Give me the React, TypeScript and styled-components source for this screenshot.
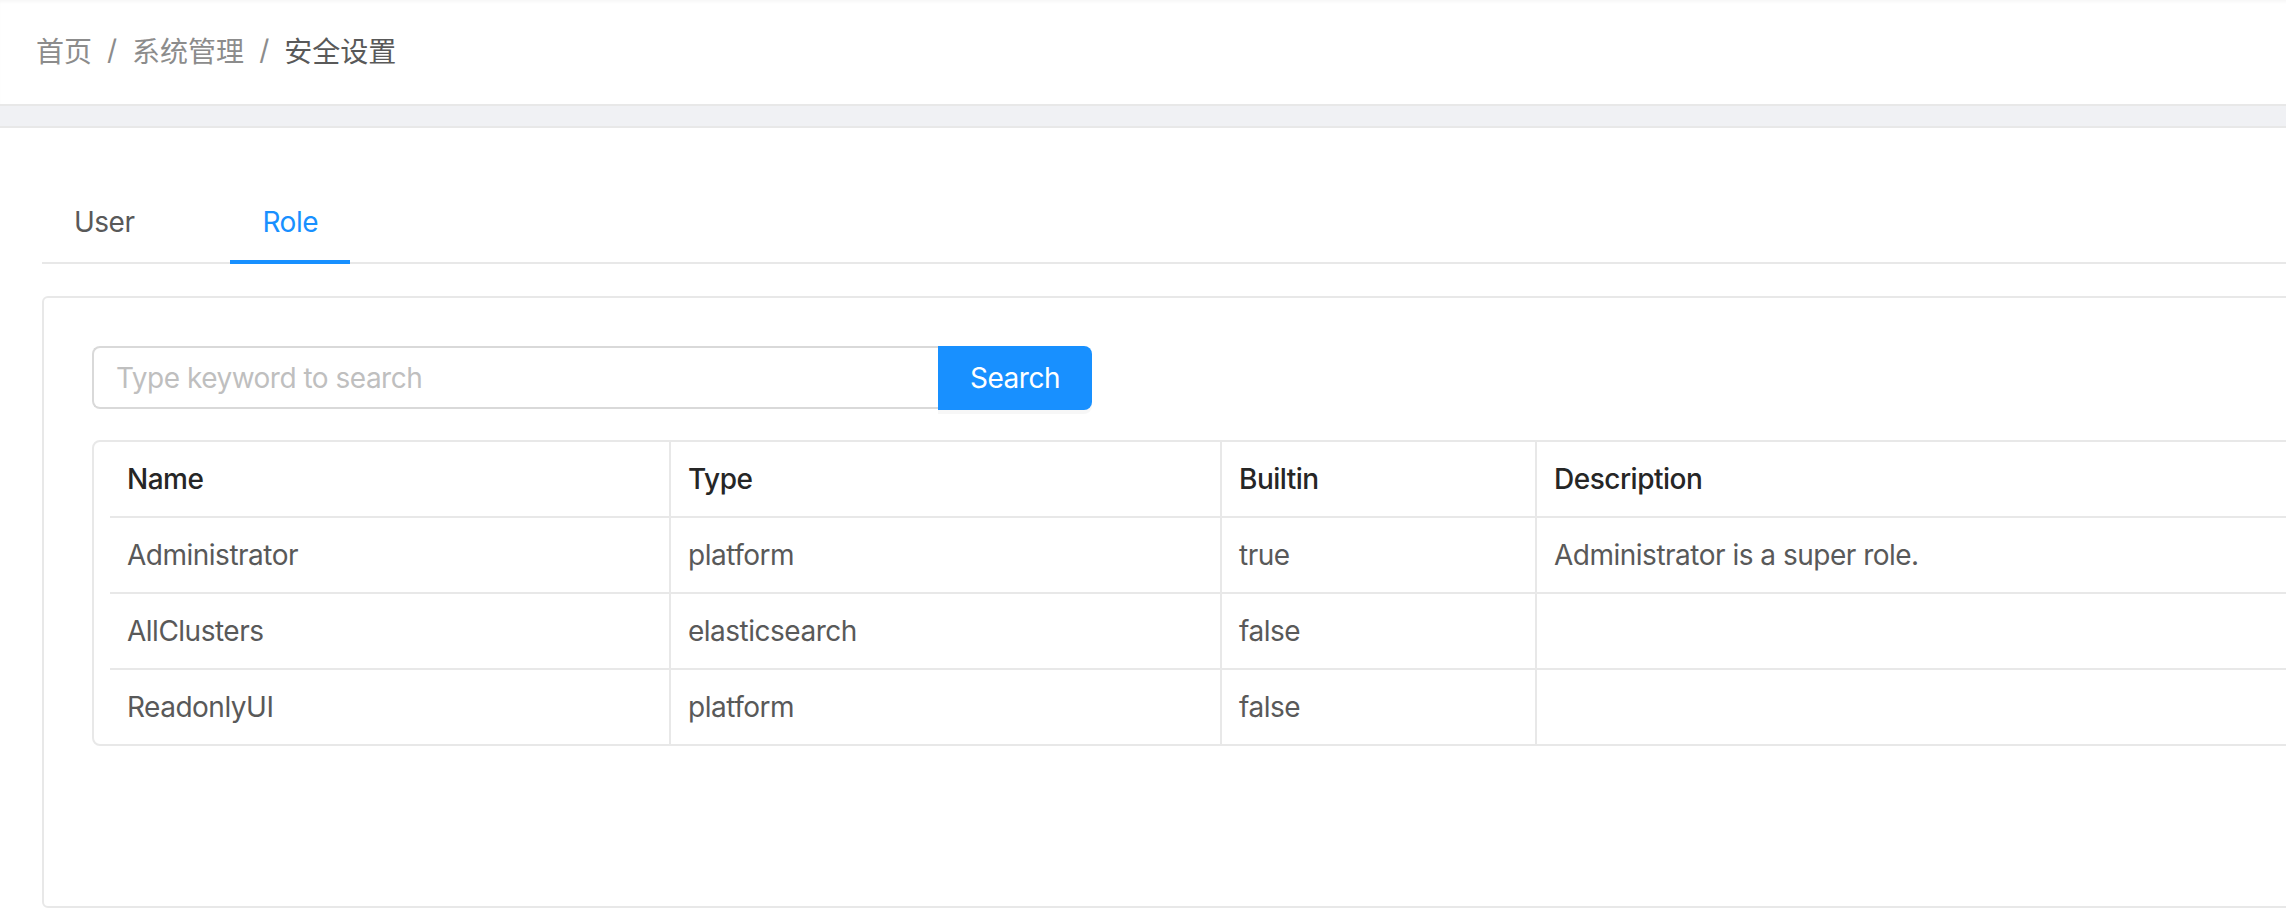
import React from "react";
import styled, { createGlobalStyle } from "styled-components";

const GlobalStyle = createGlobalStyle`
  html, body {
    margin: 0;
    padding: 0;
    background: #ffffff;
    overflow: hidden;
  }
  body {
    font-family: Inter, "Noto Sans CJK SC", "Noto Sans", sans-serif;
    letter-spacing: -0.5px;
    -webkit-font-smoothing: antialiased;
  }
  * { box-sizing: border-box; }
`;

const Page = styled.div`
  width: 2460px;
  min-height: 910px;
  background: #ffffff;
`;

const Header = styled.header`
  height: 106px;
  display: flex;
  align-items: center;
  padding-left: 36px;
  padding-bottom: 4px;
  background: #ffffff;
  border-bottom: 2px solid #e8e8e8;
  box-shadow: inset 0 3px 3px -1px rgba(0, 0, 0, 0.035);
`;

const Crumbs = styled.nav`
  display: flex;
  align-items: center;
  font-size: 28px;
  line-height: 44px;
  letter-spacing: 0;
  font-family: "Noto Sans CJK SC", Inter, sans-serif;
`;

const Crumb = styled.span<{ $current?: boolean }>`
  color: ${(p) => (p.$current ? "#595959" : "#8c8c8c")};
`;

const Sep = styled.span`
  margin: 0 15px;
  color: #8c8c8c;
  font-family: Inter, sans-serif;
`;

const Band = styled.div`
  height: 22px;
  background: #f0f1f4;
  border-bottom: 2px solid #e8e8e8;
`;

const Content = styled.main`
  padding: 44px 0 0 42px;
`;

const TabBar = styled.div`
  display: flex;
  gap: 64px;
  border-bottom: 2px solid #e8e8e8;
`;

const Tab = styled.div<{ $active?: boolean }>`
  position: relative;
  padding: 28px 32px 18px;
  font-size: 28px;
  line-height: 44px;
  color: ${(p) => (p.$active ? "#1890ff" : "#595959")};
  &::after {
    content: "";
    position: absolute;
    left: 0;
    right: 0;
    bottom: -2px;
    height: 4px;
    background: ${(p) => (p.$active ? "#1890ff" : "transparent")};
  }
`;

const Card = styled.section`
  margin-top: 32px;
  height: 612px;
  border: 2px solid #e8e8e8;
  border-radius: 6px;
  padding: 48px;
  background: #ffffff;
`;

const SearchRow = styled.div`
  display: flex;
  align-items: stretch;
  height: 64px;
`;

const SearchInput = styled.input`
  width: 846px;
  height: 63px;
  border: 2px solid #d9d9d9;
  border-right: none;
  border-radius: 8px 0 0 8px;
  padding: 0 22px;
  font-family: Inter, sans-serif;
  font-size: 28px;
  letter-spacing: -0.5px;
  color: #595959;
  outline: none;
  &::placeholder {
    color: #bfbfbf;
  }
`;

const SearchButton = styled.button`
  width: 154px;
  height: 64px;
  border: none;
  border-radius: 0 8px 8px 0;
  background: #1890ff;
  color: #ffffff;
  font-family: Inter, sans-serif;
  font-size: 28px;
  letter-spacing: -0.5px;
  box-shadow: 0 4px 0 rgba(0, 0, 0, 0.03);
  cursor: pointer;
`;

const TableWrap = styled.div`
  margin-top: 30px;
  border: 2px solid #e8e8e8;
  border-radius: 8px;
  padding-left: 16px;
`;

const Grid = styled.div`
  display: grid;
  grid-template-columns: 559px 551px 315px 1fr;
`;

const Cell = styled.div<{ $head?: boolean; $first?: boolean; $last?: boolean }>`
  height: ${(p) => (p.$last ? "74px" : "76px")};
  display: flex;
  align-items: center;
  padding-left: 17px;
  font-size: 28px;
  color: ${(p) => (p.$head ? "#262626" : "#595959")};
  font-weight: ${(p) => (p.$head ? 500 : 400)};
  border-left: ${(p) => (p.$first ? "none" : "2px solid #e8e8e8")};
  border-bottom: ${(p) => (p.$last ? "none" : "2px solid #e8e8e8")};
  white-space: nowrap;
`;

const columns = ["Name", "Type", "Builtin", "Description"];

const rows = [
  ["Administrator", "platform", "true", "Administrator is a super role."],
  ["AllClusters", "elasticsearch", "false", ""],
  ["ReadonlyUI", "platform", "false", ""],
];

export default function App() {
  return (
    <>
      <GlobalStyle />
      <Page>
        <Header>
          <Crumbs>
            <Crumb>首页</Crumb>
            <Sep>/</Sep>
            <Crumb>系统管理</Crumb>
            <Sep>/</Sep>
            <Crumb $current>安全设置</Crumb>
          </Crumbs>
        </Header>
        <Band />
        <Content>
          <TabBar>
            <Tab>User</Tab>
            <Tab $active>Role</Tab>
          </TabBar>
          <Card>
            <SearchRow>
              <SearchInput placeholder="Type keyword to search" />
              <SearchButton>Search</SearchButton>
            </SearchRow>
            <TableWrap>
              <Grid>
                {columns.map((c, i) => (
                  <Cell key={c} $head $first={i === 0}>
                    {c}
                  </Cell>
                ))}
                {rows.map((r, ri) =>
                  r.map((v, ci) => (
                    <Cell
                      key={`${ri}-${ci}`}
                      $first={ci === 0}
                      $last={ri === rows.length - 1}
                    >
                      {v}
                    </Cell>
                  ))
                )}
              </Grid>
            </TableWrap>
          </Card>
        </Content>
      </Page>
    </>
  );
}
